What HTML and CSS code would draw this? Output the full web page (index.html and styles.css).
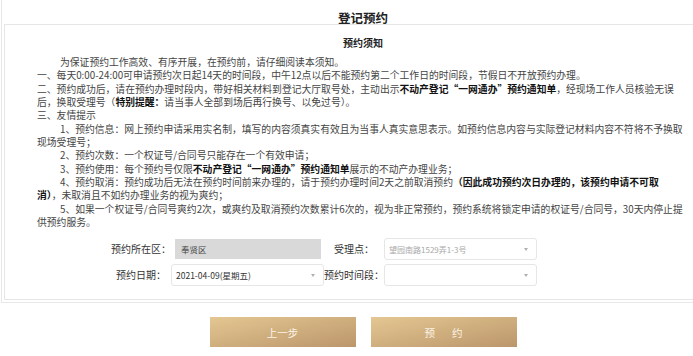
FILE: index.html
```html
<!DOCTYPE html>
<html lang="zh-CN">
<head>
    <meta charset="UTF-8">
    <meta name="viewport" content="width=device-width, initial-scale=1.0">
    <title>登记预约</title>
    <link rel="stylesheet" href="styles.css">
</head>
<body>
    <div class="page">
        <h1 class="page-title">登记预约</h1>
        <div class="notice-box">
            <h2 class="notice-title">预约须知</h2>
            <div class="notice-text">
                <p class="indent">为保证预约工作高效、有序开展，在预约前，请仔细阅读本须知。</p>
                <p>一、每天0:00-24:00可申请预约次日起14天的时间段，中午12点以后不能预约第二个工作日的时间段，节假日不开放预约办理。</p>
                <p>二、预约成功后，请在预约办理时段内，带好相关材料到登记大厅取号处，主动出示<b>不动产登记“一网通办”预约通知单</b>，经现场工作人员核验无误<br>后，换取受理号（<b>特别提醒：</b>请当事人全部到场后再行换号、以免过号）。</p>
                <p>三、友情提示</p>
                <p class="indent">1、预约信息：网上预约申请采用实名制，填写的内容须真实有效且为当事人真实意思表示。如预约信息内容与实际登记材料内容不符将不予换取<br>现场受理号；</p>
                <p class="indent">2、预约次数：一个权证号/合同号只能存在一个有效申请；</p>
                <p class="indent">3、预约使用：每个预约号仅限<b>不动产登记“一网通办”预约通知单</b>展示的不动产办理业务；</p>
                <p class="indent">4、预约取消：预约成功后无法在预约时间前来办理的，请于预约办理时间2天之前取消预约<b>（因此成功预约次日办理的，该预约申请不可取<br>消）</b>，未取消且不如约办理业务的视为爽约；</p>
                <p class="indent">5、如果一个权证号/合同号爽约2次，或爽约及取消预约次数累计6次的，视为非正常预约，预约系统将锁定申请的权证号/合同号，30天内停止提<br>供预约服务。</p>
            </div>

            <div class="form-grid">
                <label class="form-label">预约所在区：</label>
                <div class="field-readonly">奉贤区</div>
                <label class="form-label">受理点：</label>
                <div class="field-select">
                    <span class="placeholder">望园南路1529弄1-3号</span>
                    <span class="caret"></span>
                </div>

                <label class="form-label">预约日期：</label>
                <div class="field-select">
                    <span class="value">2021-04-09(星期五)</span>
                    <span class="caret"></span>
                </div>
                <label class="form-label">预约时间段：</label>
                <div class="field-select">
                    <span class="value"></span>
                    <span class="caret"></span>
                </div>
            </div>
        </div>
    </div>

    <div class="actions">
        <button class="btn">上一步</button>
        <button class="btn btn-spaced">预约</button>
    </div>
</body>
</html>
```

FILE: styles.css
```css
body {
    margin: 0;
    width: 693px;
    height: 356px;
    overflow: hidden;
    background: #fff;
    font-family: "Noto Sans CJK SC", "Microsoft YaHei", sans-serif;
    color: #333;
}
.page {
    width: 718px;
    margin-left: 1px;
    padding: 0 0 2px 2px;
    border-left: 1px solid #e8e8e8;
    border-bottom: 1px solid #e8e8e8;
}
.page-title {
    margin: 0;
    height: 24px;
    padding-top: 11px;
    box-sizing: border-box;
    text-align: center;
    font-size: 12.5px;
    line-height: 13px;
    font-weight: bold;
    color: #222;
}
.notice-box {
    border: 1px solid #e6e6e6;
    padding-bottom: 13px;
}
.notice-title {
    margin: 0;
    padding-top: 11px;
    text-align: center;
    font-size: 10px;
    line-height: 13px;
    font-weight: bold;
    color: #222;
}
.notice-text {
    margin-top: 7px;
    padding-left: 32px;
    width: 660px;
    font-size: 9.8px;
    line-height: 13.33px;
    color: #444;
}
.notice-text p {
    margin: 0;
}
.notice-text .indent {
    text-indent: 23px;
}
.notice-text b {
    color: #111;
}
.form-grid {
    margin-top: 9px;
    padding-left: 106px;
    display: grid;
    grid-template-columns: 60px 153px 60px 153px;
    grid-auto-rows: 22px;
    row-gap: 4px;
    font-size: 10px;
}
.form-label {
    text-align: center;
    line-height: 22px;
    white-space: nowrap;
    color: #333;
}
.field-readonly {
    margin: 1px 3px 1px 4px;
    padding-left: 6px;
    background: #d9d9d9;
    font-size: 8.5px;
    line-height: 20px;
    color: #444;
}
.field-select {
    display: flex;
    align-items: center;
    justify-content: space-between;
    padding: 0 8px 0 4px;
    border: 1px solid #e6e6e6;
    border-radius: 3px;
    box-sizing: border-box;
    font-size: 8.5px;
}
.field-select .value {
    color: #333;
}
.field-select .placeholder {
    color: #a8a8a8;
    font-size: 8px;
}
.caret {
    width: 0;
    height: 0;
    border-left: 2.5px solid transparent;
    border-right: 2.5px solid transparent;
    border-top: 3px solid #b0b0b0;
}
.actions {
    width: 726px;
    margin-top: 14px;
    display: flex;
    justify-content: center;
    gap: 15px;
}
.btn {
    width: 146px;
    height: 30px;
    border: none;
    padding: 0;
    background: linear-gradient(to right bottom, #e4c792, #bb966b);
    color: #fbf3e6;
    font-family: "Noto Sans CJK SC", "Microsoft YaHei", sans-serif;
    font-size: 10.5px;
    cursor: pointer;
}
.btn-spaced {
    letter-spacing: 17px;
    text-indent: 17px;
}
```
